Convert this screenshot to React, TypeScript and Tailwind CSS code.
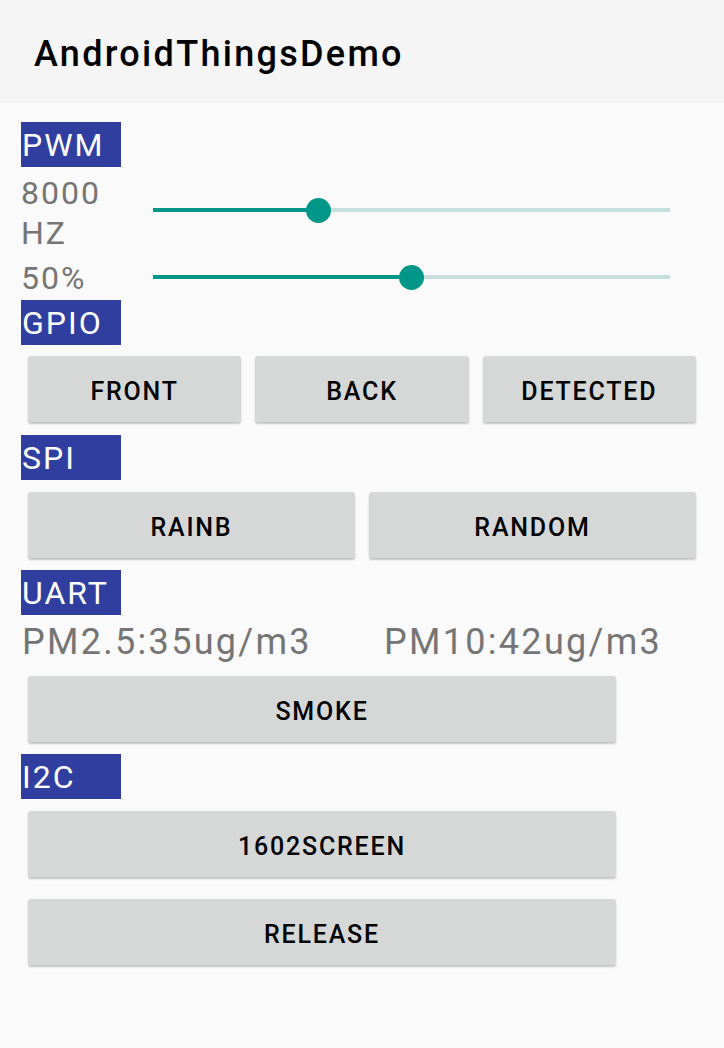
import React from 'react';

const font = { fontFamily: 'Roboto, "Noto Sans", sans-serif' };

const SectionLabel = ({ text }: { text: string }) => (
	<div className="w-[100px] h-[45px] bg-[#303f9f] text-white text-[32px] leading-[43px] pt-[2px] pl-[1px] tracking-[2px]">
		{text}
	</div>
);

const Slider = ({ value }: { value: number }) => (
	<div className="relative h-[26px] w-[517px] flex items-center">
		<div className="h-[4px] w-full bg-[#c4dfdc]" />
		<div
			className="absolute left-0 h-[4px] bg-[#009688]"
			style={{ width: `${value}%` }}
		/>
		<div
			className="absolute w-[25px] h-[25px] -ml-[12.5px] rounded-full bg-[#009688]"
			style={{ left: `${value}%` }}
		/>
	</div>
);

const AppButton = ({ label, className = '' }: { label: string; className?: string }) => (
	<button
		className={`h-[66px] pt-[5px] rounded-[3px] bg-[#d6d7d7] text-black text-[25px] font-medium tracking-[1.8px] shadow-[0_2px_2px_rgba(0,0,0,0.22)] ${className}`}
	>
		{label}
	</button>
);

export default function App() {
	return (
		<div className="min-h-[1048px] bg-[#fafafa] flex flex-col" style={font}>
			<div className="h-[103px] bg-[#f5f5f5] flex items-center pl-[34px] pt-[4px]">
				<span className="text-[36px] font-medium text-black tracking-[2.3px]">AndroidThingsDemo</span>
			</div>

			<div className="flex flex-col px-[21px] pt-[19px]">
				<SectionLabel text="PWM" />
				<div className="flex items-start mt-[6px]">
					<div className="w-[132px] text-[32px] leading-[40px] text-[#757575] tracking-[2px]">
						8000
						<br />
						HZ
					</div>
					<div className="mt-[24px]">
						<Slider value={32} />
					</div>
				</div>
				<div className="flex items-start mt-[5px]">
					<div className="w-[132px] text-[32px] leading-[40px] text-[#757575] tracking-[2px]">50%</div>
					<div className="mt-[6px]">
						<Slider value={50} />
					</div>
				</div>

				<div className="mt-[2px]">
					<SectionLabel text="GPIO" />
				</div>
				<div className="grid grid-cols-3 gap-[14px] px-[7px] mt-[11px]">
					<AppButton label="FRONT" />
					<AppButton label="BACK" />
					<AppButton label="DETECTED" />
				</div>

				<div className="mt-[13px]">
					<SectionLabel text="SPI" />
				</div>
				<div className="grid grid-cols-2 gap-[14px] px-[7px] mt-[12px]">
					<AppButton label="RAINB" />
					<AppButton label="RANDOM" />
				</div>

				<div className="mt-[12px]">
					<SectionLabel text="UART" />
				</div>
				<div className="flex text-[36px] leading-[42px] text-[#757575] tracking-[2.3px] mt-[6px] pl-[1px]">
					<span className="w-[362px]">PM2.5:35ug/m3</span>
					<span>PM10:42ug/m3</span>
				</div>
				<div className="px-[7px] mt-[13px]">
					<AppButton label="SMOKE" className="w-[588px]" />
				</div>

				<div className="mt-[12px]">
					<SectionLabel text="I2C" />
				</div>
				<div className="flex flex-col gap-[22px] px-[7px] mt-[12px]">
					<AppButton label="1602SCREEN" className="w-[588px]" />
					<AppButton label="RELEASE" className="w-[588px]" />
				</div>
			</div>
		</div>
	);
}
